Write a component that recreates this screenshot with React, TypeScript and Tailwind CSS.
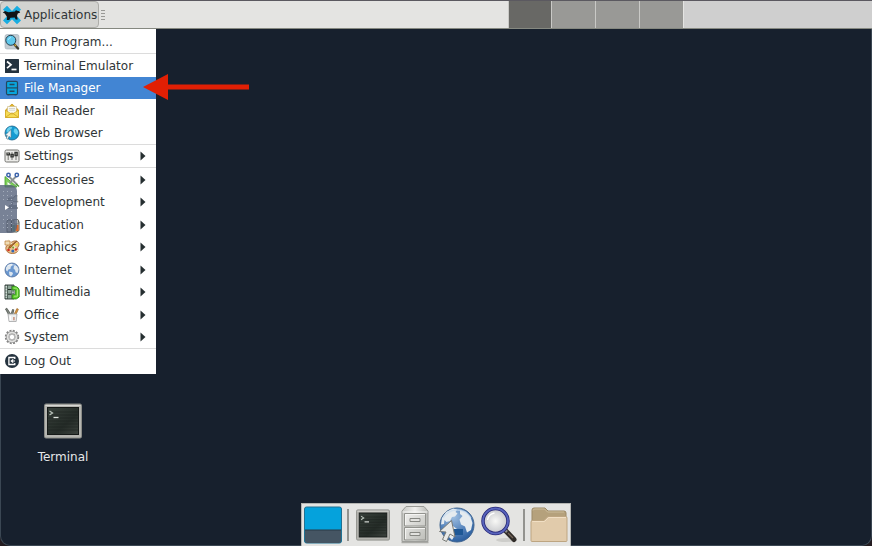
import React from "react";

type Item = {
    label: string
    icon: React.ReactNode
    submenu?: boolean
    active?: boolean
}

const Glyph = ({children}: { children: React.ReactNode }) => (
    <svg viewBox="0 0 16 16" className="size-4 shrink-0" aria-hidden="true">
        {children}
    </svg>
);

const XfceLogo = () => (
    <svg viewBox="0 0 20 20" className="size-5 shrink-0" aria-hidden="true">
        <path d="M1 4.500 5 .8 10 6l5-5.200 4 3.700L14 10l5 5.500-4 3.700-5-5-5 5-4-3.700L6 10z" fill="#19ade0"/>
        <path
            d="M.8 7.500 3 6l2 .8 1.500.5 4-.5 2.500-.2 1-1.700 1 .8 2.300.5.900 1.300-2.500 1-.7 2.500.7 3.500h-2l-1-2-4.200.2-1.300 2.300H4.800l.3-3-1.300-2-1-1.500z"
            fill="#101416"
        />
    </svg>
);

const icons = {
    run: (
        <Glyph>
            <rect x="1" y=".5" width="14" height="14.500" rx="2" fill="#c3ccd2" stroke="#a3afb8" strokeWidth=".6"/>
            <path d="m10 10 4 4.500" stroke="#3b3a30" strokeWidth="2.400" strokeLinecap="round"/>
            <path d="m10.500 10.500 1.600 1.700" stroke="#d4aa2a" strokeWidth="1.200"/>
            <circle cx="6.800" cy="6.300" r="5" fill="#5fc8ec" stroke="#26404f" strokeWidth="1"/>
            <path d="M4.200 5.800q.7-2 2.800-2.300" fill="none" stroke="#b8ecff" strokeWidth=".9"/>
        </Glyph>
    ),
    terminal: (
        <Glyph>
            <rect x="1" y="1" width="14" height="14" rx=".5" fill="#24323e"/>
            <path d="m3 3.500 4 3.300-4 3.300" fill="none" stroke="#fff" strokeWidth="1.700"/>
            <path d="M7.500 11.500h5" stroke="#fff" strokeWidth="1.700"/>
        </Glyph>
    ),
    files: (
        <Glyph>
            <rect x="2.500" y="1.300" width="11" height="13.400" rx="1.500" fill="#08a5dc" stroke="#24485f" strokeWidth="1.200"/>
            <path d="M2.500 7.900h11" stroke="#24485f" strokeWidth="1.200"/>
            <path d="M5.500 4.600h5M5.500 11.200h5" stroke="#24485f" strokeWidth="1.500"/>
            <path d="M3.300 14.800h2m5.400 0h2" stroke="#24485f"/>
        </Glyph>
    ),
    mail: (
        <Glyph>
            <path d="M1.500 7 8 1l6.500 6v7.500h-13z" fill="#e2b52b" stroke="#c99a1b" strokeWidth=".8"/>
            <path d="M3.500 3.500h9v7h-9z" fill="#f9f9f4" stroke="#c7b98a" strokeWidth=".6"/>
            <path d="M5 5.500h6M5 7.200h6" stroke="#c6c6c0" strokeWidth=".7"/>
            <path d="m1.500 7.200 6.500 4 6.500-4v7.300h-13z" fill="#f5db55" stroke="#cfa31f" strokeWidth=".6"/>
            <path d="M2 14 8 9.800l6 4.200" fill="none" stroke="#d1a323" strokeWidth=".8"/>
        </Glyph>
    ),
    browser: (
        <Glyph>
            <circle cx="8" cy="8" r="7" fill="#159bd2" stroke="#1c5f86" strokeWidth=".8"/>
            <path d="m3 4 2.500-2.300 2.700.2-.7 2-2 1.300-.5 2-2.500-.5zM10.500 3.500l2 .2 1.700 3.300-1 3-2.200-1.300-1.500-2.400z" fill="#66d0ef"/>
            <path d="M7 4.500v8.300l-2-1.500-1.300 3-1.500-1 1.200-2.700-2.200-.3z" fill="#eef3f5" stroke="#607e8c" strokeWidth=".6"/>
        </Glyph>
    ),
    settings: (
        <Glyph>
            <rect x="1" y="2" width="14" height="12" rx="1.500" fill="#ecece9" stroke="#73736f"/>
            <path d="M4.200 4v8M8 4v8M12 4v8" stroke="#777773" strokeWidth="1"/>
            <path d="M3 4.500v2.300h2.400V4.500M7 6.500h2.200v2.300H7zM11 4.500h2.200v3H11z" fill="none" stroke="#333532" strokeWidth="1.300"/>
        </Glyph>
    ),
    accessories: (
        <Glyph>
            <path d="M1 4.500 13 15H1z" fill="#7ed05a" stroke="#3f9c23" strokeWidth=".8"/>
            <path d="M3.500 10v2.800H7z" fill="#fff"/>
            <path d="m5 4.500 8.500 8.500M12 4.500 5.500 11" stroke="#8c9294" strokeWidth="1.800"/>
            <circle cx="4.500" cy="3" r="1.700" fill="none" stroke="#3c63aa" strokeWidth="1.500"/>
            <circle cx="12.800" cy="3" r="1.700" fill="none" stroke="#3c63aa" strokeWidth="1.500"/>
            <path d="m12 12 3 2.500" stroke="#4c9b31" strokeWidth="1.600"/>
        </Glyph>
    ),
    development: (
        <Glyph>
            <path d="M3 14h11M5 12h8" stroke="#7e817f" strokeWidth="1.500"/>
            <path d="M13.500 1.800H11L9.500 4H4.800L3 6.300h5.500l1.200 1.500h4.500" fill="#d3d4d1" stroke="#737672" strokeWidth=".9"/>
            <path d="M8 8v4" stroke="#a4a6a3" strokeWidth="2"/>
        </Glyph>
    ),
    education: (
        <Glyph>
            <path d="M4 3h10l1 2v8.500l-2 1.500H3V4z" fill="#d9d7ce" stroke="#47443a" strokeWidth=".9"/>
            <path d="M10 2.500h4V7h-4z" fill="#f2f1ec" stroke="#55544d" strokeWidth=".7"/>
            <path d="M8.500 8h3v6.500h-3z" fill="#4c9b6b"/>
            <path d="M11.500 8h3v6h-3z" fill="#e06b2a"/>
            <path d="M7.500 4v10.500" stroke="#342e25" strokeWidth="1.300"/>
        </Glyph>
    ),
    graphics: (
        <Glyph>
            <path d="M7 3.500c4-3 8-1.500 8 2 0 2.300-2 2.500-1.200 4.500.8 2.500-1.800 4.500-5.300 4.500-4.500 0-7.500-3-6.500-6.500.6-2 2.300-2.300 5-4.500z" fill="#e9c18a" stroke="#a05b1f" strokeWidth=".8"/>
            <path d="m4 1 9.500 11" stroke="#f5e8cb" strokeWidth="1.800"/>
            <path d="m12.800 2-6 6.500-2.300 1 .9-2.300z" fill="#c57628" stroke="#6e3d12" strokeWidth=".6"/>
            <path d="M1 2h5v4H1z" fill="#f0ddb6" stroke="#b77932" strokeWidth=".7"/>
            <circle cx="4.500" cy="11" r="1.300" fill="#d12b1e"/>
            <circle cx="8.800" cy="12" r="1.500" fill="#3266b5"/>
            <circle cx="12" cy="10.500" r="1.300" fill="#d5301d"/>
            <circle cx="12.600" cy="5.500" r="1.300" fill="#ecd33c"/>
            <circle cx="9.200" cy="8.500" r="1" fill="#6ea52f"/>
        </Glyph>
    ),
    internet: (
        <Glyph>
            <circle cx="8" cy="8" r="7" fill="#6a97cf" stroke="#516f9c" strokeWidth=".8"/>
            <path d="m2 5.500 2.600-3 3.500-.8.6 1.500-1.900 1.500-.3 2-2.500 1.100-.5 1.800L2 8.200zM5 9.500l3.300.7.700 1.600L7 14.400l-1.600-1.300zM10 3.800l2.800.2 1.800 3-1 4-2-.7-.5-2.200-1.600-1.500z" fill="#dde6ee"/>
            <path d="M3 4q4-3 9-.5" fill="none" stroke="#fff" strokeWidth=".8" opacity=".7"/>
        </Glyph>
    ),
    multimedia: (
        <Glyph>
            <path d="M1 1h9v14H1z" fill="#8ea398" stroke="#283731" strokeWidth=".9"/>
            <path d="M3.500 1v14M8 1v14" stroke="#283731" strokeWidth=".6"/>
            <path d="M2.200 2v12M9 2v12" stroke="#f2f6f3" strokeWidth="1" strokeDasharray="1.500 1.300"/>
            <path d="M4 5.500h3.500M4 10.200h3.500" stroke="#202d26"/>
            <path d="M8 2.500q6-.8 7.200 3.500V13q-2.500 3.200-7 1.600v-3.800h3.200v-5H8z" fill="#60cc2f" stroke="#25870d" strokeWidth=".8"/>
            <path d="M9.700 4.200h2.600q1.200.5 1.200 1.500v6.500h-3.500" fill="none" stroke="#b0f185" strokeWidth=".8"/>
        </Glyph>
    ),
    office: (
        <Glyph>
            <path d="M5 8.500 1.500 2l1.300-.8L7 7.500M7 7.500l1.500-5 1.300.3-1 5" fill="#848b83" stroke="#4b514b" strokeWidth=".8"/>
            <path d="m9.700 8 3.200-6.500 1.500.8-3 6.500z" fill="#d9963c" stroke="#8d5b1e" strokeWidth=".6"/>
            <path d="M4 7h9l-.8 7.500H5z" fill="#eceded" stroke="#a3a5a6" strokeWidth=".8"/>
            <path d="M6.300 9v4.500" stroke="#fff" strokeWidth="1.300"/>
            <path d="M9 10h1.800v3.200H9z" fill="#ce9d8d"/>
        </Glyph>
    ),
    system: (
        <Glyph>
            <circle cx="8" cy="8" r="6.300" fill="none" stroke="#858585" strokeWidth="1.800" strokeDasharray="2 1.300"/>
            <circle cx="8" cy="8" r="4.400" fill="none" stroke="#8c8c8c" strokeWidth="3.200"/>
            <circle cx="8" cy="8" r="4.400" fill="none" stroke="#e0e0df" strokeWidth="2"/>
            <circle cx="8" cy="8" r="2.700" fill="#fff" stroke="#949494" strokeWidth=".6"/>
        </Glyph>
    ),
    logout: (
        <Glyph>
            <circle cx="8" cy="8" r="7" fill="#24323e"/>
            <path d="M10.800 6V4.500H4.900v7h5.900V10" fill="none" stroke="#fff" strokeWidth="1.300"/>
            <path d="M7.300 8H11M9.200 6.300 7.200 8l2 1.700" fill="none" stroke="#fff" strokeWidth="1.100"/>
        </Glyph>
    )
};

const sections: Item[][] = [
    [{label: "Run Program...", icon: icons.run}],
    [
        {label: "Terminal Emulator", icon: icons.terminal},
        {label: "File Manager", icon: icons.files, active: true},
        {label: "Mail Reader", icon: icons.mail},
        {label: "Web Browser", icon: icons.browser}
    ],
    [{label: "Settings", icon: icons.settings, submenu: true}],
    [
        {label: "Accessories", icon: icons.accessories, submenu: true},
        {label: "Development", icon: icons.development, submenu: true},
        {label: "Education", icon: icons.education, submenu: true},
        {label: "Graphics", icon: icons.graphics, submenu: true},
        {label: "Internet", icon: icons.internet, submenu: true},
        {label: "Multimedia", icon: icons.multimedia, submenu: true},
        {label: "Office", icon: icons.office, submenu: true},
        {label: "System", icon: icons.system, submenu: true}
    ],
    [{label: "Log Out", icon: icons.logout}]
];

const MenuItem = ({label, icon, submenu, active}: Item) => (
    <button
        type="button"
        role="menuitem"
        aria-haspopup={submenu ? "menu" : undefined}
        className={`flex h-[22px] w-full items-center gap-1 pr-2.5 pl-1 text-left odd:h-[23px] only:h-[22px]! ${active ? "bg-[#4285d3] text-white" : "text-[#2f3537]"}`}
    >
        {icon}
        <span className="grow whitespace-nowrap">{label}</span>
        {submenu && (
            <svg viewBox="0 0 6 10" className="h-2.5 w-1.5" aria-hidden="true">
                <path d="M.5.500 5.500 5l-5 4.500z" fill="#262f31"/>
            </svg>
        )}
    </button>
);

const AppMenu = () => (
    <div
        role="menu"
        aria-label="Applications"
        className="absolute top-full left-0 z-10 mt-px w-39 divide-y divide-[#dcdcdc] bg-white pt-0.5 pb-0.5"
    >
        {sections.map((section) => (
            <div key={section[0].label} role="group" className="last:pt-px">
                {section.map((item) => <MenuItem key={item.label} {...item}/>)}
            </div>
        ))}
    </div>
);

const Panel = () => (
    <header className="relative flex h-[29px] border-t border-b border-t-[#5b5960] border-b-[#858880] bg-[#e4e4e2]">
        <button
            type="button"
            aria-haspopup="menu"
            aria-expanded="true"
            className="flex items-center gap-0.5 rounded-sm border border-[#adada9] bg-[#d3d3d0] px-px text-[#2f3537]"
        >
            <XfceLogo/>
            <span>Applications</span>
        </button>
        <div className="flex flex-col justify-center gap-0.5 pl-0.5">
            {[0, 1, 2, 3].map((n) => <span key={n} className="h-px w-1 bg-[#999996]"/>)}
        </div>
        <nav aria-label="Workspaces" className="ml-auto flex gap-px border-l border-[#c9c9c6] bg-[#c9c9c6]">
            {["Workspace 1", "Workspace 2", "Workspace 3", "Workspace 4"].map((name, n) => (
                <button
                    key={name}
                    type="button"
                    aria-label={name}
                    className={n === 0 ? "w-[42px] bg-[#686865]" : "w-[43px] bg-[#999996]"}
                />
            ))}
        </nav>
        <div className="w-[189px] border-l border-[#e4e4e2] bg-[#cfcfcf]"/>
        <AppMenu/>
    </header>
);

const TerminalArt = ({className}: { className: string }) => (
    <svg viewBox="0 0 38 36" className={className} aria-hidden="true">
        <defs>
            <linearGradient id="screen" x1="0" y1="0" x2="1" y2="1">
                <stop offset="0" stopColor="#38413b"/>
                <stop offset=".6" stopColor="#252c28"/>
                <stop offset="1" stopColor="#3c423d"/>
            </linearGradient>
        </defs>
        <rect x=".5" y="1" width="37" height="34" rx="1.500" fill="#b5b5b0" stroke="#8b8c87"/>
        <path d="M1.500 2.500h35" stroke="#d6d6d2"/>
        <rect x="3.500" y="4.500" width="31" height="27" fill="url(#screen)" stroke="#161a18"/>
        <path d="M4 9h30M4 12h30M4 15h30M4 18h30M4 21h30M4 24h30M4 27h30" stroke="#1a201c" strokeWidth=".7" opacity=".7"/>
        <path d="m5.500 8 3 2-3 2" fill="none" stroke="#b9c2ba" strokeWidth="1.300"/>
        <path d="M9.500 14.500h5" stroke="#dfe4df" strokeWidth="1.300"/>
    </svg>
);

const ShowDesktopArt = () => (
    <svg viewBox="0 0 38 38" className="size-[38px]" aria-hidden="true">
        <rect x=".5" y="1" width="37" height="36" rx="2" fill="#05a2dc" stroke="#207293"/>
        <path d="M1 24h36v11q0 2-2 2H3q-2 0-2-2z" fill="#455563"/>
        <path d="M1 24h36" stroke="#2a3b47"/>
    </svg>
);

const CabinetArt = () => (
    <svg viewBox="0 0 30 40" className="h-10 w-[30px]" aria-hidden="true">
        <defs>
            <linearGradient id="cabinet" x1="0" x2="1">
                <stop offset="0" stopColor="#c7c8c4"/>
                <stop offset=".5" stopColor="#f0f0ee"/>
                <stop offset="1" stopColor="#b7b8b4"/>
            </linearGradient>
            <linearGradient id="drawer" x1="0" y1="0" x2="1" y2="1">
                <stop offset="0" stopColor="#efefed"/>
                <stop offset="1" stopColor="#bdbeb9"/>
            </linearGradient>
        </defs>
        <path d="M2 36.500V6l4-4.500h18L28 6v30.500z" fill="url(#cabinet)" stroke="#999a96"/>
        <path d="M2.500 7h25" stroke="#f7f7f5"/>
        <path d="M4.500 8.500h21v12.500h-21zM4.500 22.500h21v12.500h-21z" fill="url(#drawer)" stroke="#92938e"/>
        <path d="M5.500 20V9.500H25M5.500 34V23.500H25" fill="none" stroke="#f4f4f2"/>
        <path d="M10 13.500h10v3H10zM10 27.500h10v3H10z" fill="#e2e2df" stroke="#868782"/>
        <path d="M1.500 37.500h27" stroke="#aaaaa6" strokeWidth="1.500"/>
    </svg>
);

const GlobeArt = () => (
    <svg viewBox="0 0 38 38" className="size-[38px]" aria-hidden="true">
        <defs>
            <radialGradient id="ocean" cx=".4" cy=".25" r=".8">
                <stop offset="0" stopColor="#9fbfe1"/>
                <stop offset=".55" stopColor="#5685bd"/>
                <stop offset="1" stopColor="#25599a"/>
            </radialGradient>
        </defs>
        <circle cx="19" cy="19" r="17" fill="url(#ocean)" stroke="#3e638f"/>
        <path d="m4 12 4-6 7-3.500 4 1-1.500 2.500 2 1.500-2.500 3-3 .5-2 4-3.500 1-2-2-.5 4-3 .5zM22 4l6 2 4.500 5 2 6-1.500 7-4 2.500-2-6-4-2-1.500-5 3-3.500-2.500-2zM9 19l6 1 4 3-2 6-3 5-4-4z" fill="#e5ebef"/>
        <path d="M16 23h9v6h-9z" fill="#1d5795"/>
        <path d="M5 12q5-8 14-8t14 8" fill="none" stroke="#c7dcef" strokeWidth="1.300" opacity=".7"/>
        <path d="M13.500 14.500 17 31l-5-3-3.500 7.500-4-2L8 26l-6.500-.5z" fill="#e8e9e7" stroke="#777975"/>
    </svg>
);

const SearchArt = () => (
    <svg viewBox="0 0 38 38" className="size-[38px]" aria-hidden="true">
        <defs>
            <radialGradient id="lens">
                <stop offset="0" stopColor="#f8f8f6"/>
                <stop offset="1" stopColor="#c7c8cc"/>
            </radialGradient>
        </defs>
        <ellipse cx="26" cy="34" rx="10" ry="2" fill="#cdcdca"/>
        <path d="m24 23 10 10.500" stroke="#302c29" strokeWidth="5" strokeLinecap="round"/>
        <path d="m23 22 4 4" stroke="#90908c" strokeWidth="2.500"/>
        <path d="m28 27 5 5" stroke="#756458" strokeWidth="1.300"/>
        <circle cx="15.500" cy="15" r="12.500" fill="url(#lens)" stroke="#292979" strokeWidth="3.500"/>
        <circle cx="15.500" cy="15" r="12.500" fill="none" stroke="#5864bd" strokeWidth="1.800"/>
        <path d="M7.500 14q1-6 7-7" fill="none" stroke="#fff" strokeWidth="1.300"/>
    </svg>
);

const FolderArt = () => (
    <svg viewBox="0 0 38 38" className="size-[38px]" aria-hidden="true">
        <path d="M2 30V4q0-2 2-2h11l3 3h16q2 0 2 2v23z" fill="#b5a17c" stroke="#9c8966"/>
        <path d="M3 4.500q0-1.500 2-1.500h9.500l3 3H34" fill="none" stroke="#cbbb99"/>
        <path d="M1 34.500V16q0-1.500 1.500-1.500H14l4-4h17.500Q37 10.500 37 12v22.500q0 1-1 1H2q-1 0-1-1z" fill="#e1cbab" stroke="#bda581"/>
        <path d="M2 16q0-.5 1-.5h11.500l4-4H36" fill="none" stroke="#f1dfc4"/>
    </svg>
);

const Separator = () => <span className="h-8 w-0.5 bg-[#93938f]"/>;

const DockButton = ({label, children}: { label: string, children: React.ReactNode }) => (
    <button type="button" aria-label={label} className="flex w-[42px] items-center justify-center">
        {children}
    </button>
);

const Dock = () => (
    <nav
        aria-label="Dock"
        className="mx-auto mt-auto -mb-px flex h-[43px] w-fit items-center border border-b-0 border-[#b4b5b2] bg-[#e4e4e2]"
    >
        <DockButton label="Show Desktop"><ShowDesktopArt/></DockButton>
        <div className="flex w-2 justify-center"><Separator/></div>
        <DockButton label="Terminal Emulator"><TerminalArt className="h-8 w-[34px]"/></DockButton>
        <DockButton label="File Manager"><CabinetArt/></DockButton>
        <DockButton label="Web Browser"><GlobeArt/></DockButton>
        <DockButton label="Application Finder"><SearchArt/></DockButton>
        <div className="flex w-2 justify-center"><Separator/></div>
        <DockButton label="Home"><FolderArt/></DockButton>
    </nav>
);

const SideHandle = () => (
    <button
        type="button"
        aria-label="Open control bar"
        className="absolute top-[185px] left-0 z-20 h-12 w-[17px] rounded-r-md bg-[#56637c]/80"
    >
        <svg viewBox="0 0 17 48" className="h-12 w-[17px]" aria-hidden="true">
            <path
                d="M3 6.500h12M3 10.500h12M3 14.500h12M11 18.500h4M11 22.500h4M11 26.500h4M3 30.500h12M3 34.500h12M3 38.500h12M3 42.500h12"
                stroke="#a4adbb"
                strokeDasharray="1 3"
            />
            <path d="m5 20 4 2.500L5 25z" fill="#fff"/>
        </svg>
    </button>
);

const App = () => {

    return (
        <div className="relative flex min-h-screen flex-col overflow-hidden bg-[#231c20] font-['DejaVu_Sans',sans-serif] text-xs">
            <Panel/>
            <main className="flex grow flex-col rounded-b-[10px] border-r border-b border-l border-[#3b4753] bg-[#17202d]">
                <button
                    type="button"
                    className="absolute top-[403px] left-6 flex w-19 flex-col items-center gap-2.5 pl-0.5 text-[#e6e8ea] text-shadow-sm"
                >
                    <TerminalArt className="h-9 w-[38px]"/>
                    Terminal
                </button>
                <Dock/>
            </main>
            <SideHandle/>
            {/* pointer to the highlighted entry */}
            <svg viewBox="0 0 106 26" className="absolute top-[74px] left-[143px] z-20 h-[26px] w-[106px]" aria-hidden="true">
                <path d="M0 13 25 0v10.500h81v5H25V26z" fill="#e11f04"/>
            </svg>
        </div>
    );
};

export default App;
